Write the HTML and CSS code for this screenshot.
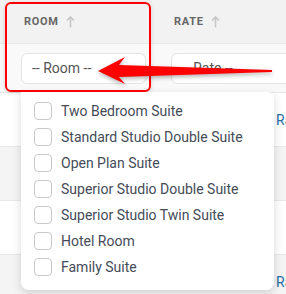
FILE: index.html
```html
<!DOCTYPE html>
<html lang="en">
<head>
    <meta charset="UTF-8">
    <title>Rooms</title>
    <link rel="stylesheet" href="styles.css">
</head>
<body>
    <div class="table">
        <div class="row head">
            <div class="cell col-room">ROOM
                <svg class="sort" width="9" height="12" viewBox="0 0 9 12"><path d="M4.5 11.5V1M1 4.5L4.5 1L8 4.5" fill="none" stroke="#c6c6c6" stroke-width="1.6"/></svg>
            </div>
            <div class="cell col-rate">RATE
                <svg class="sort" width="9" height="12" viewBox="0 0 9 12"><path d="M4.5 11.5V1M1 4.5L4.5 1L8 4.5" fill="none" stroke="#c6c6c6" stroke-width="1.6"/></svg>
            </div>
        </div>
        <div class="row filters">
            <div class="cell col-room"><div class="input">-- Room --</div></div>
            <div class="cell col-rate"><div class="input">-- Rate --</div></div>
        </div>
        <div class="row data"><div class="cell col-room"></div><div class="cell col-rate"><span class="link">Rate</span></div></div>
        <div class="row data alt"><div class="cell col-room"></div><div class="cell col-rate"></div></div>
        <div class="row data"><div class="cell col-room"></div><div class="cell col-rate"></div></div>
        <div class="row data alt"><div class="cell col-room"></div><div class="cell col-rate"><span class="link">Rate</span></div></div>
    </div>

    <!-- highlight + arrow drawn on top of the screenshot -->
    <div class="highlight"></div>
    <svg class="arrow" width="286" height="120" viewBox="0 0 286 120">
        <polygon points="98,71 125,57 119,65 272,70 272,72 119,77 125,84" fill="#f00"/>
    </svg>

    <ul class="dropdown">
        <li><span class="check"></span>Two Bedroom Suite</li>
        <li><span class="check"></span>Standard Studio Double Suite</li>
        <li><span class="check"></span>Open Plan Suite</li>
        <li><span class="check"></span>Superior Studio Double Suite</li>
        <li><span class="check"></span>Superior Studio Twin Suite</li>
        <li><span class="check"></span>Hotel Room</li>
        <li><span class="check"></span>Family Suite</li>
    </ul>
</body>
</html>
```

FILE: styles.css
```css
body {
    margin: 0;
    font-family: Roboto, "Liberation Sans", sans-serif;
    background: #fff;
    width: 286px;
    height: 294px;
    overflow: hidden;
    position: relative;
}

.table {
    width: 286px;
    overflow: hidden;
}

.row {
    display: flex;
    border-bottom: 1px solid #e8e8e8;
}

.cell {
    display: flex;
    align-items: center;
    box-sizing: border-box;
    white-space: nowrap;
}

.col-room {
    width: 155px;
    flex-shrink: 0;
    padding-left: 21px;
}

.col-rate {
    flex: 1;
    padding-left: 16px;
}

.head {
    height: 43px;
    background: #f2f2f2;
}

.head .cell {
    font-size: 11px;
    font-weight: 700;
    color: #666;
    letter-spacing: 0.7px;
}

.head .col-room {
    padding-left: 24px;
}

.head .col-rate {
    padding-left: 19px;
}

.sort {
    margin-left: 7px;
}

.filters {
    height: 48px;
    background: #f9f9f9;
}

.input {
    width: 125px;
    height: 31px;
    flex-shrink: 0;
    box-sizing: border-box;
    border: 1px solid #e4e4e4;
    border-radius: 6px;
    background: #fff;
    padding-left: 10px;
    display: flex;
    align-items: center;
    font-size: 14px;
    color: #555;
}

.col-rate .input {
    width: 200px;
}

.data {
    height: 53px;
    background: #fff;
}

.data.alt {
    background: #f4f4f4;
}

.link {
    margin-left: 105px;
    font-size: 14px;
    color: #2b6ea3;
}

.highlight {
    position: absolute;
    left: 5px;
    top: 2px;
    width: 146px;
    height: 90px;
    box-sizing: border-box;
    border: 2px solid #f00;
    border-radius: 6px;
    box-shadow: 0 1px 4px rgba(0,0,0,0.15);
}

.arrow {
    position: absolute;
    left: 0;
    top: 0;
    filter: drop-shadow(0 2px 2px rgba(0,0,0,0.3));
}

.dropdown {
    position: absolute;
    left: 21px;
    top: 92px;
    width: 253px;
    height: 198px;
    box-sizing: border-box;
    margin: 0;
    padding: 6px 0 0 13px;
    list-style: none;
    background: #fff;
    border-radius: 0 6px 8px 8px;
    box-shadow: 0 3px 10px rgba(0,0,0,0.15);
}

.dropdown li {
    height: 26px;
    display: flex;
    align-items: center;
    font-size: 14px;
    color: #454b57;
}

.check {
    width: 18px;
    height: 18px;
    box-sizing: border-box;
    border: 1px solid #c9c9c9;
    border-radius: 4px;
    margin-right: 9px;
    background: #fff;
}
```
